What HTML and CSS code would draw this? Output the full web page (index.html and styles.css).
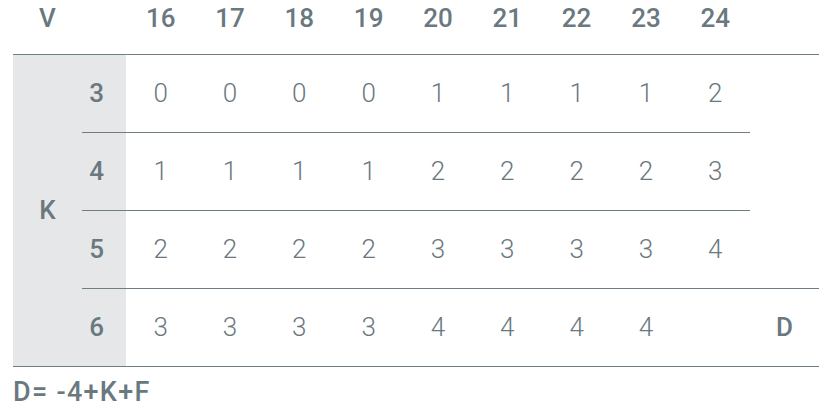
FILE: index.html
```html
<!DOCTYPE html>
<html lang="en">
<head>
  <meta charset="UTF-8">
  <meta name="viewport" content="width=device-width, initial-scale=1">
  <title>Tabla D</title>
  <link rel="stylesheet" href="styles.css">
</head>
<body>
  <table class="tabla">
    <colgroup>
      <col class="c-k">
      <col class="c-lbl">
      <col class="c-num"><col class="c-num"><col class="c-num">
      <col class="c-num"><col class="c-num"><col class="c-num">
      <col class="c-num"><col class="c-num"><col class="c-num">
      <col class="c-d">
    </colgroup>
    <thead>
      <tr>
        <th>V</th>
        <th></th>
        <th>16</th>
        <th>17</th>
        <th>18</th>
        <th>19</th>
        <th>20</th>
        <th>21</th>
        <th>22</th>
        <th>23</th>
        <th>24</th>
        <th></th>
      </tr>
    </thead>
    <tbody>
      <tr>
        <th class="k" rowspan="4">K</th>
        <th class="lbl">3</th>
        <td>0</td><td>0</td><td>0</td><td>0</td><td>1</td><td>1</td><td>1</td><td>1</td><td>2</td>
        <td class="side" rowspan="3"></td>
      </tr>
      <tr>
        <th class="lbl">4</th>
        <td>1</td><td>1</td><td>1</td><td>1</td><td>2</td><td>2</td><td>2</td><td>2</td><td>3</td>
      </tr>
      <tr>
        <th class="lbl">5</th>
        <td>2</td><td>2</td><td>2</td><td>2</td><td>3</td><td>3</td><td>3</td><td>3</td><td>4</td>
      </tr>
      <tr class="ultima">
        <th class="lbl">6</th>
        <td>3</td><td>3</td><td>3</td><td>3</td><td>4</td><td>4</td><td>4</td><td>4</td><td></td>
        <th class="d">D</th>
      </tr>
    </tbody>
  </table>

  <p class="formula">D= -4+K+F</p>
</body>
</html>
```

FILE: styles.css
```css
body {
  margin: 0;
  padding: 0 0 0 13px;
  background: #fff;
  color: #6a7880;
  font-family: Roboto, 'Liberation Sans', sans-serif;
}

.tabla {
  border-collapse: collapse;
  table-layout: fixed;
  width: 806px;
}

.c-k { width: 69px; }
.c-lbl { width: 44px; }
.c-num { width: 69.33px; }
.c-d { width: 69px; }

.tabla th,
.tabla td {
  padding: 0;
  text-align: center;
  font-size: 26px;
  line-height: 30px;
}

.tabla th {
  font-weight: 500;
}

.tabla thead tr {
  height: 54px;
}

.tabla thead th {
  vertical-align: top;
  padding-top: 3px;
  border-bottom: 1px solid #6f7d85;
}

.tabla tbody tr {
  height: 78px;
}

.tabla td {
  font-weight: 300;
}

.tabla tbody td,
.tabla .side,
.tabla .k {
  border-bottom: 1px solid #6f7d85;
}

.k,
.lbl {
  background: #e6e7e9;
}

.tabla .lbl {
  text-align: right;
  padding-right: 22px;
  border-bottom: 1px solid #6f7d85;
}

.ultima td,
.ultima th {
  border-bottom: 1px solid #6f7d85;
}

.formula {
  margin: 10px 0 0 0;
  font-size: 27px;
  line-height: 30px;
  font-weight: 500;
  letter-spacing: 1.3px;
}
```
